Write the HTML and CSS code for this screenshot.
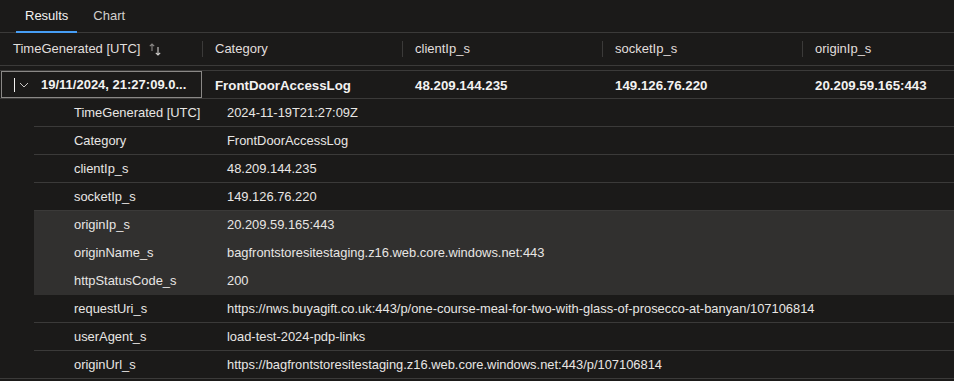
FILE: index.html
```html
<!DOCTYPE html>
<html lang="en">
<head>
    <meta charset="UTF-8">
    <title>Results</title>
    <link rel="stylesheet" href="styles.css">
</head>
<body>
    <div class="tabs">
        <div class="tab active">Results</div>
        <div class="tab">Chart</div>
    </div>

    <!-- Column headers -->
    <div class="grid head">
        <div class="hcell first">TimeGenerated [UTC]
            <svg class="sort" width="16" height="16" viewBox="0 0 16 16">
                <path d="M4 10V3M1.8 5.2L4 3l2.2 2.2" stroke="#8a8886" stroke-width="1.1" fill="none"/>
                <path d="M10 6v8M7.8 11.8L10 14l2.2-2.2" stroke="#d2d0ce" stroke-width="1.1" fill="none"/>
            </svg>
        </div>
        <div class="hcell">Category</div>
        <div class="hcell">clientIp_s</div>
        <div class="hcell">socketIp_s</div>
        <div class="hcell">originIp_s</div>
    </div>

    <!-- Expanded row -->
    <div class="row-wrap">
        <div class="grid row">
            <div class="cell first focused">
                <span class="caret"></span>
                <svg class="chev" width="10" height="6" viewBox="0 0 10 6">
                    <path d="M1 1l4 4 4-4" stroke="#c8c6c4" stroke-width="1" fill="none"/>
                </svg>
                <span class="ellip">19/11/2024, 21:27:09.0...</span>
            </div>
            <div class="cell">FrontDoorAccessLog</div>
            <div class="cell">48.209.144.235</div>
            <div class="cell">149.126.76.220</div>
            <div class="cell">20.209.59.165:443</div>
        </div>

        <div class="details">
            <div class="drow"><span class="dkey">TimeGenerated [UTC]</span><span>2024-11-19T21:27:09Z</span></div>
            <div class="drow"><span class="dkey">Category</span><span>FrontDoorAccessLog</span></div>
            <div class="drow"><span class="dkey">clientIp_s</span><span>48.209.144.235</span></div>
            <div class="drow"><span class="dkey">socketIp_s</span><span>149.126.76.220</span></div>
            <div class="drow hl"><span class="dkey">originIp_s</span><span>20.209.59.165:443</span></div>
            <div class="drow hl"><span class="dkey">originName_s</span><span>bagfrontstoresitestaging.z16.web.core.windows.net:443</span></div>
            <div class="drow hl"><span class="dkey">httpStatusCode_s</span><span>200</span></div>
            <div class="drow"><span class="dkey">requestUri_s</span><span>https://nws.buyagift.co.uk:443/p/one-course-meal-for-two-with-glass-of-prosecco-at-banyan/107106814</span></div>
            <div class="drow"><span class="dkey">userAgent_s</span><span>load-test-2024-pdp-links</span></div>
            <div class="drow last"><span class="dkey">originUrl_s</span><span>https://bagfrontstoresitestaging.z16.web.core.windows.net:443/p/107106814</span></div>
        </div>
    </div>
</body>
</html>
```

FILE: styles.css
```css
body {
    margin: 0;
    background-color: #1b1a19;
    color: #e8e6e4;
    font-family: 'Liberation Sans', Arial, sans-serif;
    font-size: 12.9px;
    overflow: hidden;
}
.tabs {
    display: flex;
    gap: 7px;
    height: 32px;
    padding-left: 16px;
    border-bottom: 1px solid #3b3a39;
}
.tab {
    padding: 0 9px;
    line-height: 32px;
    font-size: 13px;
    color: #d2d0ce;
    border-bottom: 2px solid transparent;
    margin-bottom: -1px;
    height: 31px;
}
.tab.active {
    color: #f3f2f1;
    border-bottom-color: #479ef5;
}
.grid {
    display: grid;
    grid-template-columns: 202px 200px 200px 200px 1fr;
    align-items: center;
}
.head {
    height: 32px;
    border-bottom: 1px solid #3b3a39;
    font-size: 13px;
    color: #e1dfdd;
}
.hcell {
    height: 16px;
    line-height: 16px;
    padding-left: 12px;
    border-left: 1px solid #3b3a39;
    white-space: nowrap;
}
.hcell.first {
    border-left: none;
    padding-left: 13px;
    display: flex;
    align-items: center;
}
.sort {
    margin-left: 8px;
    margin-top: -1px;
}
.row-wrap {
    margin-top: 4px;
    border-top: 1px solid #3b3a39;
    border-bottom: 1px solid #3b3a39;
}
.row {
    height: 27px;
    border-bottom: 1px solid #3b3a39;
    font-weight: 700;
    font-size: 13.3px;
    color: #f3f2f1;
}
.cell {
    padding-left: 13px;
    padding-top: 1px;
    white-space: nowrap;
}
.cell.first {
    display: flex;
    align-items: center;
    height: 25px;
    margin-left: 1px;
    padding: 0 12px;
    border: 1px solid #8a8886;
    font-size: 13px;
}
.caret {
    width: 1px;
    height: 14px;
    background: #f3f2f1;
}
.chev {
    margin-left: 4px;
}
.ellip {
    flex: 1;
    margin-left: 12px;
    overflow: hidden;
}
.details {
    margin-left: 34px;
}
.drow {
    display: flex;
    align-items: center;
    height: 27px;
    padding-left: 40px;
    border-bottom: 1px solid #3b3a39;
    white-space: nowrap;
}
.drow.hl {
    background-color: #31302f;
    border-bottom-color: #31302f;
}
.drow.last {
    border-bottom: none;
}
.dkey {
    width: 153px;
    flex-shrink: 0;
}
```
